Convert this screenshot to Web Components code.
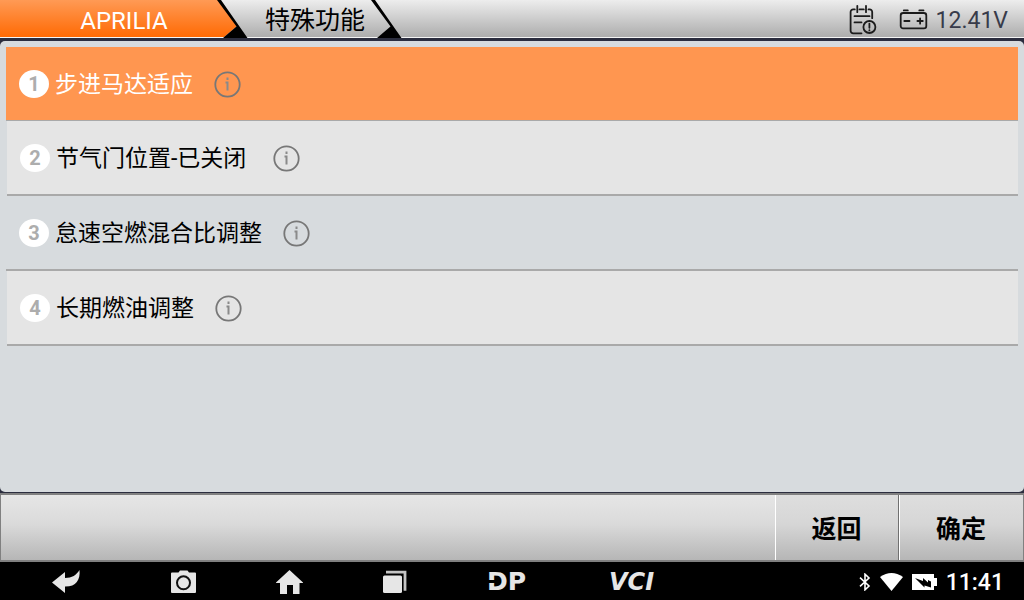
<!DOCTYPE html>
<html lang="zh-CN">
<head>
<meta charset="utf-8">
<meta name="viewport" content="width=device-width, initial-scale=1">
<title>APRILIA - 特殊功能</title>
<style>
  html, body { margin: 0; }
  body { background: #000; font-family: Roboto, "Noto Sans CJK SC", sans-serif; color: #000; }
</style>
</head>
<body>
<diag-app></diag-app>

<template id="t-app">
  <style>
    :host { display: flex; flex-direction: column; min-height: 100vh; background: #2b2d3e; }
    main { flex: 1; margin: 3px 0 1px; padding: 6px; border-radius: 5px; background: #d7dbde; }
  </style>
  <title-bar>
    <crumb-tab active>APRILIA</crumb-tab>
    <crumb-tab>特殊功能</crumb-tab>
    <span slot="voltage">12.41V</span>
  </title-bar>
  <main>
    <function-list></function-list>
  </main>
  <action-bar>
    <action-button>返回</action-button>
    <action-button>确定</action-button>
  </action-bar>
  <system-bar><time slot="clock">11:41</time></system-bar>
</template>

<template id="t-title">
  <style>
    :host { display: block; }
    header { display: flex; align-items: stretch; height: 37px; border-bottom: 1px solid #f4f4f4;
      background: linear-gradient(#ededed, #adadad); }
    nav { display: flex; flex: 1; }
    .status { display: flex; align-items: center; padding: 2px 16px 0 0; }
    .log { margin-right: 22px; padding: 0; border: 0; background: none; display: flex; }
    .bat { margin-right: 8px; }
    svg { display: block; fill: none; stroke: #1c1c1c; stroke-width: 1.8; stroke-linecap: round; stroke-linejoin: round; }
    .volt { padding-top: 2px; font-size: 23px; line-height: 32px; color: #383b4a; }
  </style>
  <header>
    <nav aria-label="路径"><slot></slot></nav>
    <div class="status">
      <button class="log" aria-label="日志">
        <svg width="28" height="32" viewBox="0 0 28 32">
          <path d="M12.5 29.3H4.2a2.6 2.6 0 0 1-2.6-2.6V8a2.6 2.6 0 0 1 2.6-2.6h1.6M10.5 5.4h4.3M19.5 5.4h1.1A2.6 2.6 0 0 1 23.2 8v6.2M8.3 1.8v6.4M17 1.8v6.4M5.5 12.2h15M5.5 18.4h7"/>
          <circle cx="20.4" cy="23" r="6"/>
          <path d="M20.4 19.6v4.2M20.4 26.2v.2"/>
        </svg>
      </button>
      <svg class="bat" width="29" height="21" viewBox="0 0 29 21" aria-hidden="true">
        <rect x="1.7" y="4" width="25.6" height="15.4" rx="2.4"/>
        <path d="M4.8 1.4h4M20.3 1.4h4.2M5.3 12h5.2M18.4 12h5.4M21.1 9.3v5.4"/>
      </svg>
      <span class="volt"><slot name="voltage"></slot></span>
    </div>
  </header>
</template>

<template id="t-crumb">
  <style>
    :host { display: grid; position: relative; z-index: 1; height: 38px; min-width: 174px; margin-left: -20px; }
    :host([active]) { z-index: 2; min-width: 248px; margin-left: 0; }
    a { display: grid; place-items: center; padding-top: 4px; font-size: 25px; line-height: 34px; color: #000;
      text-decoration: none; position: relative; }
    :host([active]) a { font-size: 24px; color: #fff; }
    .fill { display: none; position: absolute; inset: 0 0 1px 0; background: linear-gradient(#ff9a55, #ff6a04);
      clip-path: polygon(0 0, calc(100% - 30px) 0, calc(100% - 11px) 26px, calc(100% - 24px) 100%, 0 100%); }
    :host([active]) .fill { display: block; }
    svg { position: absolute; right: 0; top: 0; }
  </style>
  <div class="fill"></div>
  <svg width="32" height="38" viewBox="0 0 32 38" aria-hidden="true"><path d="M1 0h4L31.5 38H7L20.5 26.500z"/></svg>
  <a href="#"><slot></slot></a>
</template>

<template id="t-list">
  <style>
    :host { display: block; }
    ul { list-style: none; margin: 0; padding: 0; }
    li { display: flex; align-items: center; height: 73px; border-bottom: 2px solid #a9a9a9; }
    li:nth-child(even) { margin-left: 1px; background: #e5e5e5; }
    li.selected { background: #ff9650; color: #fff; border-bottom-width: 1px; }
    button { padding: 0; border: 0; background: none; font: inherit; color: inherit; cursor: pointer; }
    .pick { display: flex; align-items: center; gap: 6px; height: 100%; padding: 1px 0 0 13px; }
    .num { display: grid; place-items: center; width: 30px; height: 28px; border-radius: 50%; background: #fff;
      color: #adadad; font-size: 20px; line-height: 28px; font-weight: 700; }
    .name { padding-top: 2px; font-size: 23px; line-height: 32px; white-space: pre; }
    .info { display: flex; padding-top: 1px; margin-left: 21px; }
    svg { display: block; fill: none; stroke: #777; stroke-width: 1.8; }
  </style>
  <ul></ul>
</template>

<template id="t-actions">
  <style>
    :host { display: block; }
    footer { display: flex; justify-content: flex-end; height: 65px; border: 2px solid #808080; border-width: 2px 1px;
      background: linear-gradient(#e6e6e6, #dadada 45%, #b6b6b6); }
  </style>
  <footer><slot></slot></footer>
</template>

<template id="t-action">
  <style>
    :host { display: flex; }
    button { width: 124px; padding: 4px 1px 0 0; border: 0; border-left: 1px solid #fff; border-right: 1px solid #707070;
      background: linear-gradient(#dedede, #d6d6d6 45%, #b6b6b6); font: inherit; font-weight: 700; font-size: 25px; line-height: 36px; color: #000; }
    :host(:last-child) button { border-right: 0; }
  </style>
  <button type="button"><slot></slot></button>
</template>

<template id="t-system">
  <style>
    :host { display: block; background: #000; color: #fff; }
    .bar { display: flex; align-items: center; justify-content: space-between; height: 36px; padding: 2px 20px 0 52px; }
    nav { display: flex; align-items: center; gap: 80px; }
    button { display: flex; padding: 0; border: 0; background: none; color: #e6e6e6; font: 700 24px/24px "DejaVu Sans", sans-serif; }
    svg { display: block; fill: currentColor; }
    .dp { position: relative; width: 42px; font-size: 25px; }
    .dp::after { content: ""; position: absolute; left: 0; top: 10px; width: 14px; height: 3px; background: #000; }
    .vci { width: 44px; font-style: italic; }
    .tray { display: flex; align-items: center; gap: 9px; }
    .clock { padding-top: 1px; font-size: 23px; line-height: 32px; font-weight: 500; }
  </style>
  <div class="bar">
    <nav aria-label="系统导航">
      <button aria-label="后退"><svg width="39" height="24" viewBox="0 0 39 24"><path d="M0 12.600 13 2v6C20 8 24.500 5 27.500 0 28.500 10 24 16.800 13 16.600V23z"/></svg></button>
      <button aria-label="截图"><svg width="25" height="24" viewBox="0 0 25 24"><path d="M1 2.600h6.500L9 .4h7.500L18 2.600h6a1 1 0 0 1 1 1V22a1 1 0 0 1-1 1H1a1 1 0 0 1-1-1V3.600a1 1 0 0 1 1-1z"/><circle cx="12.500" cy="12.800" r="6.500" fill="none" stroke="#111" stroke-width="2"/></svg></button>
      <button aria-label="主页"><svg width="27" height="24" viewBox="0 0 27 24"><path d="M13.500 0 27 12.500V13h-3.500v11h-6.500v-9h-6v9H4V13H0v-.5z"/></svg></button>
      <button aria-label="最近任务"><svg width="24" height="24" viewBox="0 0 24 24"><rect y="5.500" width="19" height="17.500" rx="1.500"/><path d="M3 2.200h19v18.500" fill="none" stroke="#c4c4c4" stroke-width="2.800"/></svg></button>
      <button class="dp">DP</button>
      <button class="vci">VCI</button>
    </nav>
    <div class="tray">
      <svg width="12" height="18" viewBox="0 0 12 18" aria-hidden="true"><path d="M1 4.700 10 13l-4 3.800V1.200L10 5 1 13.300" fill="none" stroke="#fff" stroke-width="1.600"/></svg>
      <svg width="23" height="18" viewBox="0 0 23 18" aria-hidden="true"><path d="M0 4Q11.500-4 23 4L11.500 18z"/></svg>
      <svg width="25" height="16" viewBox="0 0 25 16" aria-hidden="true"><path d="M0 0h22v4h3v8h-3v4H0z"/><path d="M3 4 11 7V4l5 4.500V6l3 1.500V13.500L12.500 11.500V13.500z" fill="#000"/></svg>
      <span class="clock"><slot name="clock"></slot></span>
    </div>
  </div>
</template>

<script>
  class ShadowElement extends HTMLElement {
    constructor() {
      super();
      const template = document.getElementById(this.constructor.template);
      this.attachShadow({ mode: "open" }).append(template.content.cloneNode(true));
    }
  }

  class CrumbTab extends ShadowElement { static template = "t-crumb"; }
  class TitleBar extends ShadowElement { static template = "t-title"; }
  class ActionButton extends ShadowElement { static template = "t-action"; }
  class ActionBar extends ShadowElement { static template = "t-actions"; }
  class SystemBar extends ShadowElement { static template = "t-system"; }
  class DiagApp extends ShadowElement { static template = "t-app"; }

  class FunctionList extends ShadowElement {
    static template = "t-list";
    static items = ["步进马达适应", "节气门位置-已关闭 ", "怠速空燃混合比调整", "长期燃油调整"];
    connectedCallback() {
      this.shadowRoot.querySelector("ul").innerHTML = FunctionList.items.map((name, i) => `
        <li class="${i === 0 ? "selected" : ""}">
          <button class="pick"><span class="num">${i + 1}</span><span class="name">${name}</span></button>
          <button class="info" aria-label="说明"><svg width="27" height="27" viewBox="0 0 27 27">
            <circle cx="13.500" cy="13.500" r="12.200"/>
            <path d="M13.500 6.500v2.500M11.500 11.500h2V19.500" stroke="#8a8a8a" stroke-width="2"/></svg></button>
        </li>`).join("");
    }
  }

  customElements.define("crumb-tab", CrumbTab);
  customElements.define("title-bar", TitleBar);
  customElements.define("function-list", FunctionList);
  customElements.define("action-button", ActionButton);
  customElements.define("action-bar", ActionBar);
  customElements.define("system-bar", SystemBar);
  customElements.define("diag-app", DiagApp);
</script>
</body>
</html>
